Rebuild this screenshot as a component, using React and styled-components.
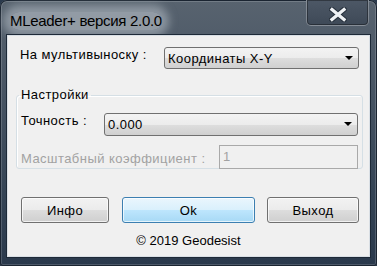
import React from "react";
import styled, { createGlobalStyle } from "styled-components";

const GlobalStyle = createGlobalStyle`
  html, body { margin: 0; padding: 0; background: #2b3a4d; }
  body { width: 377px; height: 266px; overflow: hidden; }
`;

const Window = styled.div`
  box-sizing: border-box;
  width: 377px;
  height: 266px;
  display: flex;
  flex-direction: column;
  padding: 0 7px 9px;
  border-radius: 7px 7px 3px 3px;
  background: linear-gradient(to bottom, #58636f 0%, #475463 35%, #364556 70%, #2a394c 100%);
  box-shadow: inset 0 0 0 1px #1a2431, inset 0 0 0 2px rgba(255, 255, 255, 0.16);
  font-family: "Liberation Sans", Arial, sans-serif;
`;

const TitleBar = styled.div`
  height: 35px;
  display: flex;
  align-items: flex-start;
  justify-content: space-between;
`;

const Title = styled.span`
  margin: 12px 0 0 3px;
  font-size: 15px;
  line-height: 18px;
  letter-spacing: -0.3px;
  color: #000;
  border-radius: 9px;
  background: rgba(196, 204, 212, 0.55);
  box-shadow: 0 0 9px 7px rgba(196, 204, 212, 0.5);
`;

const CloseButton = styled.div`
  box-sizing: border-box;
  width: 63px;
  height: 26px;
  margin-right: 1px;
  padding-top: 3px;
  display: flex;
  align-items: center;
  justify-content: center;
  border: 1px solid rgba(255, 255, 255, 0.32);
  border-top: none;
  border-radius: 0 0 5px 5px;
  background: linear-gradient(to bottom, #4d5866, #3e4957);
  box-shadow: inset 0 0 0 1px rgba(0, 0, 0, 0.35);
`;

const Client = styled.div`
  flex: 1;
  background: #f0f0f0;
  border: 1px solid #d9dfe5;
  box-shadow: 0 0 0 1px #1d2937;
  padding: 11px 0 0 12px;
  font-size: 13px;
  line-height: 15px;
  letter-spacing: 0.45px;
  color: #000;
`;

const Row = styled.div`
  display: flex;
  align-items: flex-start;
  margin-top: ${(p) => p.$top || 0}px;
`;

const Label = styled.div`
  width: ${(p) => p.$width}px;
  margin-top: ${(p) => p.$offset || 0}px;
  color: ${(p) => (p.$disabled ? "#a2a2a2" : "#000")};
  white-space: nowrap;
`;

const Combo = styled.div`
  box-sizing: border-box;
  width: ${(p) => p.$width}px;
  height: ${(p) => p.$height}px;
  display: flex;
  justify-content: space-between;
  align-items: flex-start;
  padding: 3px 5px 0 3px;
  border: 1px solid #707070;
  border-radius: 3px;
  background: linear-gradient(to bottom, #f3f3f3 0%, #ececec 50%, #dedede 50%, #d0d0d0 100%);
`;

const Arrow = styled.svg`
  margin-top: 5px;
  flex: none;
`;

const Group = styled.fieldset`
  box-sizing: border-box;
  width: 347px;
  margin: 18px 0 0 -4px;
  padding: 0 0 0 4px;
  border: 1px solid #d5dfe5;
  border-radius: 3px;
  box-shadow: inset 1px 1px 0 #fff;
`;

const Legend = styled.legend`
  margin-left: -2px;
  padding: 0 2px;
  line-height: 16px;
`;

const TextBox = styled.div`
  box-sizing: border-box;
  width: 139px;
  height: 24px;
  margin-bottom: -1px;
  padding: 3px 0 0 3px;
  border: 1px solid #a9a9a9;
  background: #f0f0f0;
  color: #a2a2a2;
`;

const ButtonRow = styled.div`
  display: flex;
  margin: 28px 0 0 1px;
`;

const Button = styled.button`
  box-sizing: border-box;
  width: ${(p) => p.$width}px;
  height: 26px;
  margin-right: ${(p) => p.$gap || 0}px;
  padding: 0;
  border: 1px solid ${(p) => (p.$primary ? "#3c7fb1" : "#707070")};
  border-radius: 3px;
  background: ${(p) =>
    p.$primary
      ? "linear-gradient(to bottom, #eaf6fd 0%, #d9f0fc 50%, #bee6fd 50%, #a7d9f5 100%)"
      : "linear-gradient(to bottom, #f2f2f2 0%, #ebebeb 50%, #dddddd 50%, #cfcfcf 100%)"};
  box-shadow: inset 0 0 0 1px rgba(255, 255, 255, 0.7);
  font-family: "Liberation Sans", Arial, sans-serif;
  font-size: 13px;
  letter-spacing: 0.45px;
  color: #000;
`;

const Footer = styled.div`
  margin: 10px 0 0 -12px;
  text-align: center;
  letter-spacing: 0;
`;

const DropArrow = () => (
  <Arrow width="8" height="4" viewBox="0 0 8 4">
    <polygon points="0,0 8,0 4,4" fill="#000" />
  </Arrow>
);

const CloseGlyph = () => (
  <svg width="18" height="15" viewBox="0 0 18 15">
    <path d="M3 2.5 L15 12.5 M15 2.5 L3 12.5" stroke="#27313d" strokeWidth="5.5" strokeLinecap="square" />
    <path d="M3 2.5 L15 12.5 M15 2.5 L3 12.5" stroke="#eef1f4" strokeWidth="3.3" strokeLinecap="square" />
  </svg>
);

export default function App() {
  return (
    <>
      <GlobalStyle />
      <Window>
        <TitleBar>
          <Title>MLeader+ версия 2.0.0</Title>
          <CloseButton>
            <CloseGlyph />
          </CloseButton>
        </TitleBar>
        <Client>
          <Row>
            <Label $width={144}>На мультивыноску :</Label>
            <Combo $width={195} $height={22}>
              <span>Координаты X-Y</span>
              <DropArrow />
            </Combo>
          </Row>
          <Group>
            <Legend>Настройки</Legend>
            <Row $top={10}>
              <Label $width={83}>Точность :</Label>
              <Combo $width={254} $height={23}>
                <span>0.000</span>
                <DropArrow />
              </Combo>
            </Row>
            <Row $top={9}>
              <Label $width={198} $offset={6} $disabled>
                Масштабный коэффициент :
              </Label>
              <TextBox>1</TextBox>
            </Row>
          </Group>
          <ButtonRow>
            <Button $width={88} $gap={13}>Инфо</Button>
            <Button $width={133} $gap={12} $primary>Ok</Button>
            <Button $width={92}>Выход</Button>
          </ButtonRow>
          <Footer>© 2019 Geodesist</Footer>
        </Client>
      </Window>
    </>
  );
}
